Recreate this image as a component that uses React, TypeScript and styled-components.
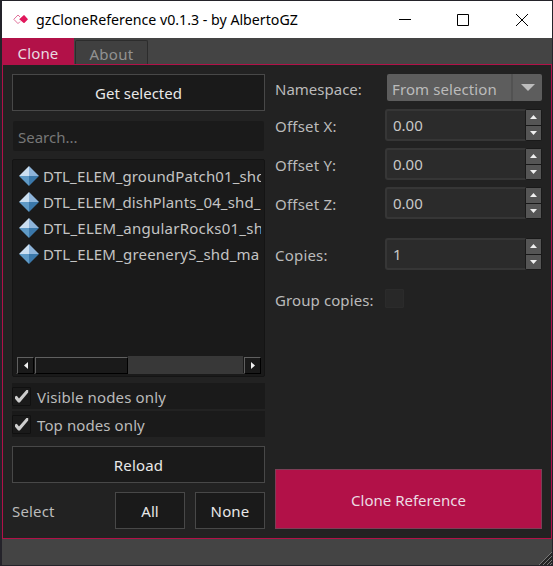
import React from 'react';
import styled, { createGlobalStyle } from 'styled-components';

const Global = createGlobalStyle`
  * { box-sizing: border-box; }
  body { margin: 0; background: #24252c; overflow: hidden; }
`;

const Window = styled.div`
  width: 553px;
  height: 566px;
  padding: 1px 1px 1px 2px;
  display: flex;
  flex-direction: column;
  background: #24232a;
  font-family: 'Noto Sans', 'Open Sans', sans-serif;
  font-size: 15px;
  line-height: 20px;
  color: #bbb;
`;

const TitleBar = styled.header`
  flex: 0 0 37px;
  display: flex;
  align-items: center;
  background: #fff;
  color: #000;
  padding-left: 11px;
`;

const Text = styled.span<{ $ls?: number; $size?: number; $dy?: number }>`
  white-space: nowrap;
  letter-spacing: ${(p) => p.$ls ?? 0}px;
  font-size: ${(p) => p.$size ?? 15}px;
  margin-top: ${(p) => p.$dy ?? 0}px;
`;

const TitleText = styled(Text)`
  margin-left: 8px;
  flex: 1;
`;

const Caption = styled.div`
  display: flex;
  gap: 46px;
  padding-right: 24px;
  svg { display: block; }
  svg:last-child { margin-left: 1px; }
`;

const TabBar = styled.nav`
  flex: 0 0 26px;
  display: flex;
  align-items: flex-end;
  background: #444;
`;

const Tab = styled.div<{ $active?: boolean }>`
  width: ${(p) => (p.$active ? 72 : 73)}px;
  height: ${(p) => (p.$active ? 26 : 24)}px;
  margin-left: ${(p) => (p.$active ? 0 : 1)}px;
  display: flex;
  align-items: center;
  justify-content: center;
  padding-top: ${(p) => (p.$active ? 4 : 2)}px;
  background: ${(p) => (p.$active ? '#b21148' : '#404040')};
  color: ${(p) => (p.$active ? '#e8dbe0' : '#929292')};
  border: ${(p) => (p.$active ? 'none' : '1px solid #2c2c2c')};
  border-bottom: none;
  border-radius: ${(p) => (p.$active ? 0 : '2px 2px 0 0')};
`;

const Pane = styled.main`
  flex: 0 0 475px;
  display: flex;
  gap: 10px;
  border: 1px solid #b21148;
  background: #222;
  padding: 9px;
`;

const Left = styled.section`
  width: 253px;
  display: flex;
  flex-direction: column;
`;

const Right = styled.section`
  width: 267px;
  display: flex;
  flex-direction: column;
`;

const Button = styled.button<{ $w?: number; $primary?: boolean }>`
  width: ${(p) => (p.$w ? p.$w + 'px' : '100%')};
  height: ${(p) => (p.$primary ? 60 : 37)}px;
  flex-shrink: 0;
  display: flex;
  align-items: center;
  justify-content: center;
  padding: ${(p) => (p.$primary ? 2 : 0)}px 0 0;
  margin: ${(p) => (p.$primary ? 'auto 0 0' : '0')};
  font: inherit;
  color: ${(p) => (p.$primary ? '#ecdce2' : '#e8e8e8')};
  background: ${(p) => (p.$primary ? '#b21148' : '#1a1a1a')};
  border: 1px solid ${(p) => (p.$primary ? '#7b3f56' : '#484848')};
`;

const Search = styled.div`
  height: 30px;
  margin: 10px 1px 8px;
  display: flex;
  align-items: center;
  padding: 1px 0 0 5px;
  background: #1a1a1a;
  border-radius: 2px;
  color: #777;
`;

const List = styled.div`
  height: 218px;
  padding: 3px 3px 2px;
  display: flex;
  flex-direction: column;
  background: #1a1a1a;
  border: 1px solid #141414;
  border-radius: 2px;
`;

const Item = styled.div`
  height: 26px;
  display: flex;
  align-items: center;
  overflow: hidden;
  padding-left: 3px;
  gap: 4px;
  color: #c4c4c4;
  svg { flex: none; }
`;

const ScrollBar = styled.div`
  margin-top: auto;
  height: 18px;
  display: flex;
  background: #383838;
`;

const ScrollPart = styled.div<{ $w: number; $end?: boolean }>`
  width: ${(p) => p.$w}px;
  margin: 1px 0 0 ${(p) => (p.$end ? 'auto' : '1px')};
  display: flex;
  align-items: center;
  justify-content: center;
  background: #1a1a1a;
  border: 1px solid #606060;
  border-right-color: #000;
  border-bottom-color: #000;
  box-shadow: -1px -1px 0 #1a1a1a, 0 -1px 0 #1a1a1a;
`;

const CheckRow = styled.label<{ $top: number }>`
  height: 26px;
  margin-top: ${(p) => p.$top}px;
  display: flex;
  align-items: center;
  background: #1a1a1a;
  gap: 6px;
`;

const CheckBox = styled.span<{ $light?: boolean }>`
  width: 19px;
  height: 19px;
  display: block;
  background: ${(p) => (p.$light ? '#282828' : '#1a1a1a')};
  border: 1px solid ${(p) => (p.$light ? '#2b2b2b' : '#101010')};
  border-radius: 1px;
  svg { display: block; overflow: visible; }
`;

const SelectRow = styled.div`
  display: flex;
  align-items: center;
  gap: 10px;
  margin-top: 9px;
`;

const Grow = styled.div`
  flex: 1;
`;

const Field = styled.div<{ $mb: number; $h: number }>`
  height: ${(p) => p.$h}px;
  margin-bottom: ${(p) => p.$mb}px;
  display: flex;
  align-items: center;
  flex-shrink: 0;
`;

const FieldLabel = styled.div<{ $pt?: number }>`
  width: 110px;
  flex-shrink: 0;
  padding-top: ${(p) => p.$pt ?? 1}px;
`;

const Combo = styled.div`
  margin-left: 2px;
  width: 155px;
  height: 27px;
  display: flex;
  align-items: center;
  background: #5d5d5d;
  border-radius: 2px;
  padding: 3px 0 0 5px;
`;

const ComboArrow = styled.div`
  width: 31px;
  height: 27px;
  margin: -3px 0 0 auto;
  border-left: 2px solid #525252;
  display: flex;
  align-items: center;
  justify-content: center;
`;

const Spin = styled.div`
  width: 157px;
  height: 32px;
  display: flex;
  background: #2b2b2b;
  border: 2px solid #363636;
  border-right: none;
  border-radius: 3px;
  color: #c8c8c8;
`;

const SpinText = styled.div`
  flex: 1;
  padding: 4px 0 0 6px;
`;

const Steps = styled.div`
  width: 17px;
  height: 32px;
  margin-top: -2px;
  padding: 1px;
  display: flex;
  flex-direction: column;
  gap: 1px;
  background: #191919;
  border-radius: 2px;
`;

const Step = styled.div`
  flex: 1;
  display: flex;
  align-items: center;
  justify-content: center;
  background: #555;
`;

const StatusBar = styled.footer`
  flex: 1;
  display: flex;
  align-items: flex-end;
  justify-content: flex-end;
  background: #444;
  svg { display: block; }
`;

const Logo = () => (
  <svg width="15" height="11" viewBox="0 0 15 11">
    <path d="M5 1L.8 5.3 5 9.6l2-2M5 1l2 2" fill="none" stroke="#e0709a" strokeWidth="1" />
    <path d="M10.4 1.4q.6-.6 1.2 0L15 5.2l-3.4 3.6q-.6.6-1.2 0L6.2 5.2z" fill="#e0185c" />
  </svg>
);

const Gem = () => (
  <svg width="20" height="20" viewBox="0 0 20 20">
    <path d="M10 0v10H0z" fill="#cbdff1" />
    <path d="M10 0v10h10z" fill="#8db4da" />
    <path d="M0 10h10v10z" fill="#5f9ac6" />
    <path d="M20 10H10v10z" fill="#3b78aa" />
  </svg>
);

const Arrow = ({ d, w, h, fill = '#f0f0f0' }: { d: string; w: number; h: number; fill?: string }) => (
  <svg width={w} height={h} viewBox={`0 0 ${w} ${h}`}>
    <path d={d} fill={fill} />
  </svg>
);

const Tick = () => (
  <svg width="17" height="17" viewBox="0 0 17 17">
    <path d="M2 8.5l1.8-.8 2.2 2.8L13.4 2h1.8v2.4L6.8 14.6H5.2L2 10.8z" fill="#cdcdcd" />
  </svg>
);

const nodes: [string, number][] = [
  ['DTL_ELEM_groundPatch01_shd', 0.14],
  ['DTL_ELEM_dishPlants_04_shd_', 0.14],
  ['DTL_ELEM_angularRocks01_sh', 0.24],
  ['DTL_ELEM_greeneryS_shd_ma', 0.2],
];

const SpinBox = ({ value }: { value: string }) => (
  <Spin>
    <SpinText>
      <Text>{value}</Text>
    </SpinText>
    <Steps>
      <Step><Arrow d="M0 4L3.5 0 7 4z" w={7} h={4} /></Step>
      <Step><Arrow d="M0 0h7L3.5 4z" w={7} h={4} /></Step>
    </Steps>
  </Spin>
);

const spins: [string, string, number][] = [
  ['Offset X:', '0.00', 7],
  ['Offset Y:', '0.00', 7],
  ['Offset Z:', '0.00', 19],
  ['Copies:', '1', 19],
];

export default function App() {
  return (
    <>
      <Global />
      <Window>
        <TitleBar>
          <Logo />
          <TitleText $size={14.2}>gzCloneReference v0.1.3 - by AlbertoGZ</TitleText>
          <Caption>
            <svg width="12" height="12"><path d="M0 5.5h12" stroke="#000" /></svg>
            <svg width="12" height="12"><path d="M.5.5h11v11H.5z" stroke="#000" fill="none" /></svg>
            <svg width="12" height="12"><path d="M0 0l12 12M12 0L0 12" stroke="#000" /></svg>
          </Caption>
        </TitleBar>
        <TabBar>
          <Tab $active><Text $ls={0.15}>Clone</Text></Tab>
          <Tab><Text $ls={0.3}>About</Text></Tab>
        </TabBar>
        <Pane>
          <Left>
            <Button><Text>Get selected</Text></Button>
            <Search><Text>Search...</Text></Search>
            <List>
              {nodes.map(([name, ls]) => (
                <Item key={name}>
                  <Gem />
                  <Text $ls={ls}>{name}</Text>
                </Item>
              ))}
              <ScrollBar>
                <ScrollPart $w={17}><Arrow d="M4 0v7L0 3.5z" w={4} h={7} /></ScrollPart>
                <ScrollPart $w={93} />
                <ScrollPart $w={17} $end><Arrow d="M0 0v7l4-3.5z" w={4} h={7} /></ScrollPart>
              </ScrollBar>
            </List>
            <CheckRow $top={6}><CheckBox><Tick /></CheckBox><Text $ls={0.15} $dy={1}>Visible nodes only</Text></CheckRow>
            <CheckRow $top={2}><CheckBox><Tick /></CheckBox><Text $ls={0.1} $dy={1}>Top nodes only</Text></CheckRow>
            <Grow />
            <Button><Text $ls={0.15}>Reload</Text></Button>
            <SelectRow>
              <Text $ls={0.15}>Select</Text>
              <Grow />
              <Button $w={70}><Text>All</Text></Button>
              <Button $w={70}><Text $ls={0.15}>None</Text></Button>
            </SelectRow>
          </Left>
          <Right>
            <Field $h={27} $mb={8}>
              <FieldLabel $pt={3}><Text>Namespace:</Text></FieldLabel>
              <Combo>
                <Text $ls={0.1}>From selection</Text>
                <ComboArrow><Arrow d="M0 0h14L7 7z" w={14} h={7} fill="#bdbdbd" /></ComboArrow>
              </Combo>
            </Field>
            {spins.map(([label, value, mb]) => (
              <Field key={label} $h={32} $mb={mb}>
                <FieldLabel><Text $ls={0.2}>{label}</Text></FieldLabel>
                <SpinBox value={value} />
              </Field>
            ))}
            <Field $h={19} $mb={0}>
              <FieldLabel $pt={3}><Text $ls={0.1}>Group copies:</Text></FieldLabel>
              <CheckBox $light />
            </Field>
            <Button $primary><Text>Clone Reference</Text></Button>
          </Right>
        </Pane>
        <StatusBar>
          <svg width="13" height="13">
            <path d="M0 13L13 0v13z" fill="#252525" />
            <path d="M0 13L13 0M4 13l9-9M8 13l5-5M11 13l2-2" stroke="#777" />
          </svg>
        </StatusBar>
      </Window>
    </>
  );
}
